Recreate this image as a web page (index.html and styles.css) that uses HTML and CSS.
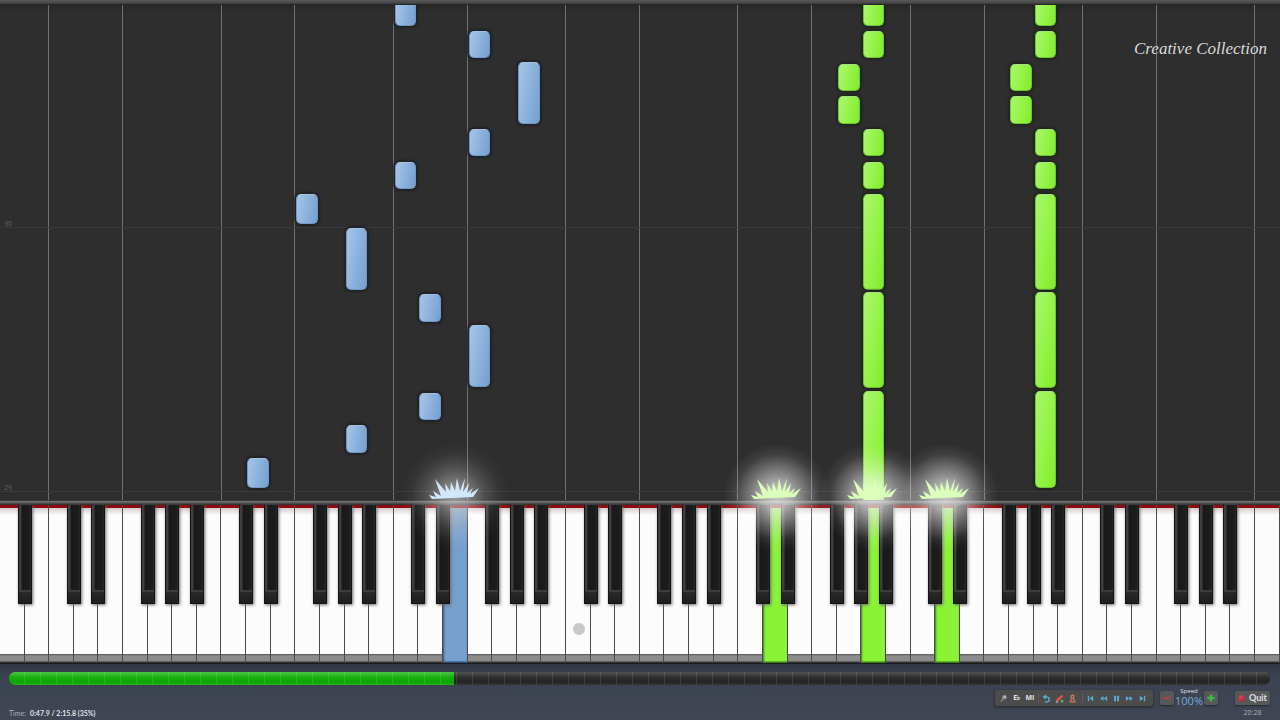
FILE: index.html
```html
<!DOCTYPE html>
<html lang="en">
<head>
<meta charset="utf-8">
<title>Creative Collection</title>
<link rel="stylesheet" href="styles.css">
</head>
<body>
<main class="stage">
  <div class="rail rail-top"></div>
  <section class="roll" id="roll" aria-label="Falling notes">
    <div class="watermark">Creative Collection</div>
  </section>
  <div class="rail rail-bottom"></div>
  <section class="keyboard" id="keyboard" aria-label="Keyboard">
    <div class="pointer-dot"></div>
  </section>
</main>
<footer class="footer">
  <div class="track"><progress class="progress" value="35.3" max="100" aria-label="Song position"></progress></div>
  <div class="bar">
    <div class="time"><span class="time-label">Time:</span><span>0:47.9 / 2:15.8 (35%)</span></div>
    <div class="controls">
      <div class="toolbar">
        <button class="tool" aria-label="Search"><svg viewBox="0 0 10 10"><circle cx="6" cy="3.5" r="2.5" fill="#8d929f"/><circle cx="6.5" cy="3" r="1" fill="#c6cad4"/><path d="M4.5 5.5 2 8.5" stroke="#a08f98" stroke-width="1.2"/></svg></button>
        <button class="tool text-tool">E♭</button>
        <button class="tool text-tool">MI</button>
        <span class="divider"></span>
        <button class="tool" aria-label="Loop"><svg viewBox="0 0 10 10" fill="none" stroke="#55acd3" stroke-width="1.6"><path d="M2.5 3.2h2.9a2.8 2.8 0 1 1-2 4.8"/><path d="M4.6 .2.6 3.2l4 3z" fill="#55acd3" stroke="none"/></svg></button>
        <button class="tool" aria-label="Edit"><svg viewBox="0 0 10 10"><path d="m.8 8.8.9-2.9L7.3.8 9.2 2.6 3.7 8z" fill="#df5148"/><circle cx="7.8" cy="8" r="1.6" fill="#43b750"/><path d="M1 9h2.5" stroke="#eee" stroke-width=".9"/></svg></button>
        <button class="tool" aria-label="Metronome"><svg viewBox="0 0 10 10"><path d="M1.5 8.8h7M3 8l1-3.2h2L7.2 8M3.4 4.8V2.2L5.2 1l1.6 1.4-1 1.6" fill="none" stroke="#c77c55" stroke-width="1.4"/></svg></button>
        <span class="divider"></span>
        <button class="tool" aria-label="To start"><svg viewBox="0 0 10 10" fill="#58abd1"><path d="M2 2h1.5v6H2zM8 2v6L4 5z"/></svg></button>
        <button class="tool" aria-label="Rewind"><svg viewBox="0 0 10 10" fill="#58abd1"><path d="M5 2.2v5.6L1.3 5zM9 2.2v5.6L5.3 5z"/></svg></button>
        <button class="tool" aria-label="Pause"><svg viewBox="0 0 10 10" fill="#58abd1"><path d="M2.3 2h2.2v6H2.300zM5.600 2h2.200v6H5.600z"/></svg></button>
        <button class="tool" aria-label="Forward"><svg viewBox="0 0 10 10" fill="#58abd1"><path d="M1 2.2v5.600L4.700 5zM5 2.200v5.600L8.700 5z"/></svg></button>
        <button class="tool" aria-label="To end"><svg viewBox="0 0 10 10" fill="#58abd1"><path d="M2 2v6l4-3zM6.500 2H8v6H6.500z"/></svg></button>
      </div>
      <div class="speed">
        <button class="step" aria-label="Slower"><svg viewBox="0 0 10 10"><path d="M.5 3.500h9v3h-9z" fill="#a8414f"/></svg></button>
        <div class="speed-value"><span class="speed-label">Speed</span><span class="speed-number">100%</span></div>
        <button class="step" aria-label="Faster"><svg viewBox="0 0 10 10"><path d="M3.500.5h3v3h3v3h-3v3h-3v-3h-3v-3h3z" fill="#3fb845"/></svg></button>
      </div>
      <div class="exit">
        <button class="quit"><span class="quit-dot"></span>Quit</button>
        <span class="clock">20:28</span>
      </div>
    </div>
  </div>
</footer>
<script src="app.js"></script>
</body>
</html>
```
FILE: styles.css
```css
* { box-sizing: border-box; }
body {
  margin: 0;
  min-height: 100vh;
  display: flex;
  flex-direction: column;
  background: #3c4250;
  font-family: "Open Sans", "Noto Sans", sans-serif;
  color: #dfe2e8;
  overflow: hidden;
}
button { border: 0; padding: 0; color: inherit; font: inherit; background: none; }
svg { display: block; }

.stage { flex: 1; display: flex; flex-direction: column; }
.rail { height: 5px; position: relative; }
.rail-top { background: linear-gradient(#585858, #484848 60%, #1d1d1d); z-index: 1; }
.rail-bottom { background: linear-gradient(#202020, #707070 30%, #555 60%, #292929); }

.roll {
  flex: 1;
  position: relative;
  background: linear-gradient(#252525, #2e2e2e 6px);
}
.lane-line { position: absolute; top: 0; bottom: 0; width: 1px; background: #707070; }
.measure { position: absolute; left: 0; right: 0; border-top: 1px solid #3b3b3b; }
.measure span { position: absolute; left: 4px; bottom: 0; font-size: 7px; line-height: 8px; color: #646464; }
.note {
  position: absolute;
  border-radius: 5px;
  margin-left: 1px;
  background: linear-gradient(100deg, #a5c5e8, #8fb5de 45%, #749fd0);
  border: 1px solid #7297c0;
  border-top-color: #a5c2e2;
  box-shadow: 0 0 2px 2px #202226;
}
.note.right {
  background: linear-gradient(100deg, #a9f670, #98f44c 45%, #82ec2c);
  border-color: #70c436;
  border-top-color: #a3e37a;
  box-shadow: 0 0 2px 2px #20281c;
}
.note.cut-top { border-top: 0; border-top-left-radius: 0; border-top-right-radius: 0; }
.note.cut-bottom {
  border-bottom: 0;
  border-bottom-left-radius: 0;
  border-bottom-right-radius: 0;
}
.watermark {
  position: absolute;
  z-index: 1;
  top: 32px;
  right: 13px;
  font: italic 17px/24px "Liberation Serif", serif;
  color: #dadada;
}

.keyboard {
  height: 159px;
  position: relative;
  display: flex;
  background: #1b1c20;
  padding-bottom: 1px;
}
.key {
  flex: 1;
  position: relative;
  border-right: 1px solid #4a4a4a;
  background: linear-gradient(#8d0b10 3px, #d5cccc 3px, #fdfcfd 10px, #fdfcfd 149px, #555 149px, #8c8c8a 151px, #8c8c8a 156px, #333 157px);
}
.key.blue { background: linear-gradient(#8d0b10 3px, #7391ad 3px, #759fcc 30px, #759fcc 156px, #2b4f78 157px); box-shadow: inset 1px 0 2px #365980; }
.key.green { background: linear-gradient(#8d0b10 3px, #7fd83a 3px, #8bf336 36px, #8bf336 156px, #397f12 157px); box-shadow: inset 1px 0 2px #437e1b; }
.black {
  position: absolute;
  z-index: 1;
  top: 0;
  right: -8px;
  width: 14px;
  height: 99px;
  border: 1px solid #141414;
  border-top: 0;
  background: linear-gradient(90deg, #3e3e3e 2px, #191919 3px, #1c1c1c 10px, #282828 12px);
  box-shadow: 1px 1px 3px #6b6b6b;
}
.black::after {
  content: "";
  position: absolute;
  left: 0;
  right: 0;
  bottom: 0;
  height: 11px;
  border-top: 2px solid #3c3c3c;
  background: linear-gradient(#292929, #1d1d1d);
}
.glow {
  position: absolute;
  z-index: 2;
  top: -62px;
  width: 108px;
  height: 108px;
  margin-left: -54px;
  background: radial-gradient(closest-side, #ffffffb8, #ffffff9c 25%, #ffffff50 55%, #ffffff14 80%, transparent);
}
.glow.blue { background: radial-gradient(closest-side, #ffffff80, #ffffff60 25%, #ffffff28 55%, #ffffff0a 80%, transparent); }
.burst { position: absolute; z-index: 3; top: -28px; width: 52px; height: 22px; margin-left: -26px; fill: #d9ffb8; }
.burst.blue { fill: #d1e8fb; }
.pointer-dot {
  position: absolute;
  z-index: 1;
  left: 45.2%;
  top: 118px;
  width: 12px;
  height: 12px;
  margin-left: -6px;
  border-radius: 50%;
  background: #c8c8c8;
}

.footer {
  height: 56px;
  padding: 8px 10px 0 9px;
  background: linear-gradient(#303540, #3b4250 12px, #404654);
  font-size: 7px;
  line-height: 8px;
}
.track { position: relative; height: 13px; border-radius: 6px; overflow: hidden; }
.track::after {
  content: "";
  position: absolute;
  inset: 0;
  background: repeating-linear-gradient(90deg, transparent 0 15px, #ffffff1c 15px 16px);
}
.progress { display: block; width: 100%; height: 13px; border: 0; appearance: none; }
.progress::-webkit-progress-bar { background: linear-gradient(#535353, #303030 40%, #222 75%, #343434); }
.progress::-webkit-progress-value { background: linear-gradient(#4bc543, #16ad0c 45%, #0da503 80%, #27b31c); }
.bar { display: flex; justify-content: space-between; padding-top: 5px; }
.time { display: flex; gap: 4px; padding-top: 19px; font-family: Lato, sans-serif; font-weight: 700; }
.time-label { color: #a9afbc; font-weight: 400; }
.controls { display: flex; align-items: flex-start; }
.toolbar {
  display: flex;
  align-items: center;
  justify-content: space-around;
  width: 158px;
  height: 16px;
  padding: 0 3px 0 2px;
  border-radius: 2px;
  background: #4b4c4b;
  box-shadow: 0 1px 2px 1px #2f333b;
}
.tool { width: 10px; }
.tool svg { width: 9px; height: 9px; }
.text-tool { font-size: 7px; font-weight: 700; white-space: nowrap; }
.divider { width: 1px; height: 10px; background: #5a5c5d; }
.speed { display: flex; align-items: flex-start; margin-left: 7px; }
.step, .quit {
  display: flex;
  align-items: center;
  justify-content: center;
  height: 14px;
  margin-top: 1px;
  border-radius: 2px;
  background: #575859;
  box-shadow: 0 1px 2px #252830;
}
.step { width: 14px; }
.step svg { width: 8px; height: 8px; }
.speed-value { width: 30px; display: flex; flex-direction: column; align-items: center; margin-top: -2px; }
.speed-label { font-size: 6px; line-height: 7px; }
.speed-number { font-size: 11px; line-height: 12px; color: #75a9da; }
.exit { display: flex; flex-direction: column; align-items: center; margin-left: 17px; gap: 4px; }
.quit { width: 35px; gap: 4px; font-family: Lato, sans-serif; font-size: 9px; font-weight: 700; }
.quit-dot { width: 7px; height: 7px; border-radius: 50%; background: radial-gradient(circle at 40% 30%, #cf4a55, #98232e); }
.clock { color: #aeb3bf; }
```
FILE: app.js
```js
const WHITE_KEYS = 52;
const ROLL_HEIGHT = 495;
const roll = document.getElementById('roll');
const keyboard = document.getElementById('keyboard');
const percent = (n, total) => (n / total) * 100 + '%';

function add(parent, className, styles) {
  const el = document.createElement('div');
  el.className = className;
  Object.assign(el.style, styles);
  parent.append(el);
  return el;
}

// Keys run from A0 to C8; lines separate B|C and E|F.
for (let i = 1; i < WHITE_KEYS; i++) {
  if (i % 7 === 2 || i % 7 === 5) add(roll, 'lane-line', { left: 'calc(' + percent(i, WHITE_KEYS) + ' - 1px)' });
}
for (const [label, y] of [['30', 222], ['29', 486]]) {
  const line = add(roll, 'measure', { top: percent(y, ROLL_HEIGHT) });
  line.innerHTML = '<span>' + label + '</span>';
}

// [white key, start, end]
const left = [
  [16, 0, 21], [19, 26, 53], [21, 57, 119], [19, 124, 151], [16, 157, 184],
  [12, 189, 219], [14, 223, 285], [17, 289, 317], [19, 320, 382],
  [17, 388, 415], [14, 420, 448], [10, 453, 483]
];
const right = [];
for (const base of [35, 42]) {
  right.push([base, 0, 21], [base, 26, 53], [base - 1, 59, 86], [base - 1, 91, 119],
    [base, 124, 151], [base, 157, 184], [base, 189, 285], [base, 287, 383],
    [base, 386, base === 35 ? 495 : 483]);
}
function drawNotes(notes, hand) {
  for (const [key, start, end] of notes) {
    const cut = start === 0 ? ' cut-top' : end === ROLL_HEIGHT ? ' cut-bottom' : '';
    add(roll, 'note ' + hand + cut, {
      left: percent(key, WHITE_KEYS),
      width: 'calc(' + percent(1, WHITE_KEYS) + ' - 3px)',
      top: percent(start, ROLL_HEIGHT),
      height: percent(end - start, ROLL_HEIGHT)
    });
  }
}
drawNotes(left, 'left');
drawNotes(right, 'right');

const pressed = { 18: 'blue', 31: 'green', 35: 'green', 38: 'green' };
for (let i = 0; i < WHITE_KEYS; i++) {
  const key = add(keyboard, 'key ' + (pressed[i] || ''), {});
  const edge = (i + 1) % 7;
  if (edge !== 2 && edge !== 5 && i < WHITE_KEYS - 1) add(key, 'black', {});
}

const spikes = 'M3 22 0 18l7 2-3-6 8 5L6 2l11 13-1-9 5 8 1-9 4 9 2-13 3 13 5-13-2 14 6-9-2 10 6-5-3 6 9-6-6 9z';
for (const [x, color] of [[455, 'blue'], [777, 'green'], [873, 'green'], [945, 'green']]) {
  const at = percent(x, 1280);
  add(keyboard, 'glow ' + color, { left: at });
  keyboard.insertAdjacentHTML('beforeend',
    '<svg class="burst ' + color + '" style="left:' + at + '" viewBox="0 0 52 22"><path d="' + spikes + '"/></svg>');
}
```
